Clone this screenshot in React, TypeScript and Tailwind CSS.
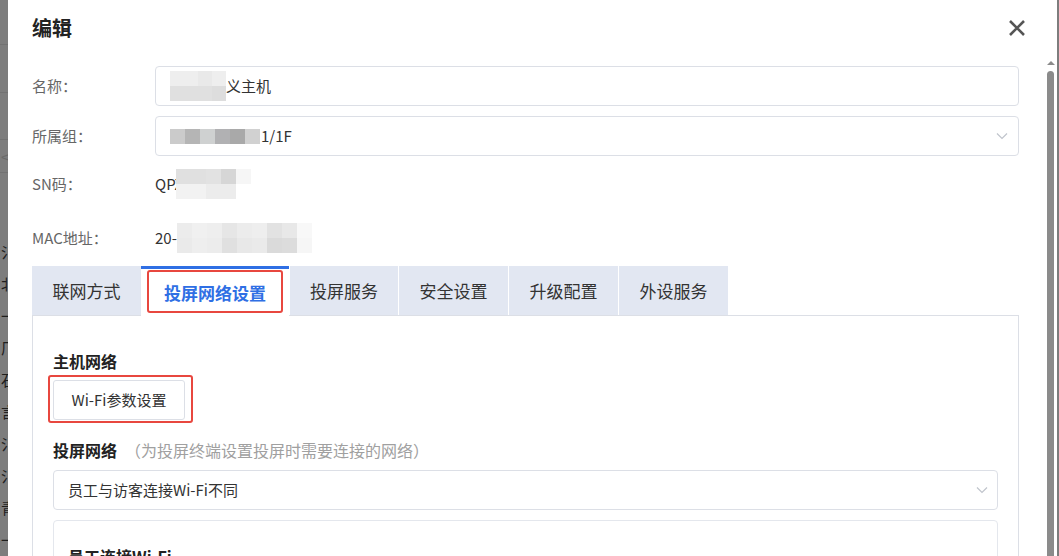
import React from 'react'

const font = { fontFamily: '"Noto Sans CJK SC", "Noto Sans", sans-serif' }

// pixelated blur blocks that hide private values
const Mosaic = ({ rows, cell = 'w-[15px]' }: { rows: string[][]; cell?: string }) => (
    <span className="inline-flex flex-col align-middle">
        {rows.map((r, i) => (
            <span key={i} className="flex">
                {r.map((c, j) => (
                    <span key={j} className={`block h-[15px] ${cell}`} style={{ backgroundColor: c }} />
                ))}
            </span>
        ))}
    </span>
)

const Chevron = () => (
    <svg width="12" height="8" viewBox="0 0 12 8" fill="none">
        <path d="M1 1.5 L6 6.5 L11 1.5" stroke="#c0c4cc" strokeWidth="1.2" />
    </svg>
)

const tabs = [
    { name: '联网方式', w: 'w-[109px]' },
    { name: '投屏网络设置', w: 'w-[148px]', active: true },
    { name: '投屏服务', w: 'w-[109px]' },
    { name: '安全设置', w: 'w-[110px]' },
    { name: '升级配置', w: 'w-[110px]' },
    { name: '外设服务', w: 'w-[110px]' },
]

const bgChars = ['氵', '北', '一', '厂', '石', '言', '氵', '氵', '青', '一']

export default function App() {
    return (
        <div className="flex w-[1059px] h-[556px] overflow-hidden bg-[#7d7d7d]" style={font}>
            {/* page behind the overlay */}
            <div className="w-[8px] shrink-0 overflow-hidden flex flex-col">
                <div className="h-[48px] border-b border-[#727272]"></div>
                <div className="h-[50px] border-b border-[#727272]"></div>
                <div className="h-[50px] border-b border-[#727272]"></div>
                <div className="h-[33px] border-b border-[#727272] text-[#6a6a6a] text-[15px] leading-[33px] pl-[1px]">&lt;</div>
                <div className="h-[67px]"></div>
                <div className="flex flex-col pl-[1px] text-[15px] leading-[32px] text-[#1e1e1e]">
                    {bgChars.map((c, i) => (
                        <span key={i} className="whitespace-nowrap">{c}</span>
                    ))}
                </div>
            </div>

            {/* modal */}
            <div className="w-[1048px] shrink-0 bg-white flex flex-col">
                <div className="h-[55px] shrink-0 flex items-center justify-between pl-[24px] pr-[30px]">
                    <h2 className="text-[20px] font-bold text-[#222] leading-[28px]">编辑</h2>
                    <svg width="18" height="18" viewBox="0 0 18 18">
                        <path d="M2 2 L16 16 M16 2 L2 16" stroke="#555" strokeWidth="2.6" />
                    </svg>
                </div>

                <div className="flex flex-1 min-h-0">
                    <div className="flex-1 pl-[24px] pr-[28px] pt-[11px] text-[15px]">
                        <div className="flex items-center">
                            <span className="w-[123px] shrink-0 text-[#666]">名称：</span>
                            <div className="flex-1 h-[40px] border border-[#dcdfe6] rounded-[4px] flex items-center pl-[14px] text-[#333]">
                                <Mosaic cell="w-[14px]" rows={[['#eeeeee', '#eeeeee', '#e9e9e9', '#eeeeee'], ['#e0e0e0', '#e0e0e0', '#e0e0e0', '#dddddd']]} />
                                <span>义主机</span>
                            </div>
                        </div>
                        <div className="flex items-center mt-[10px]">
                            <span className="w-[123px] shrink-0 text-[#666]">所属组：</span>
                            <div className="flex-1 h-[40px] border border-[#dcdfe6] rounded-[4px] flex items-center pl-[14px] pr-[10px] text-[#333]">
                                <Mosaic rows={[['#cbcbcb', '#b5b5b5', '#cfd1d1', '#b1b1b3', '#a9a9a9', '#d1d1d1']]} />
                                <span className="ml-[1px]">1/1F</span>
                                <span className="ml-auto"><Chevron /></span>
                            </div>
                        </div>
                        <div className="flex items-center mt-[8px] h-[40px]">
                            <span className="w-[123px] shrink-0 text-[#666]">SN码：</span>
                            <span className="text-[#333]">QPZ</span>
                            <span className="-ml-[7px]">
                                <Mosaic rows={[['#e0e0e0', '#e0e0e0', '#e2e2e2', '#d6d6d6', '#f6f6f6'], ['#f2f2f2', '#f2f2f2', '#ececec', '#ececec', '#ffffff']]} />
                            </span>
                        </div>
                        <div className="flex items-center mt-[14px] h-[40px]">
                            <span className="w-[123px] shrink-0 text-[#666]">MAC地址：</span>
                            <span className="text-[#333]">20-</span>
                            <Mosaic rows={[['#ececec', '#f0f0f0', '#eeeeee', '#e6e6e6', '#ececec', '#eeeeee', '#e2e2e2', '#e8e8e8', '#f8f8f8'], ['#eaeaea', '#eeeeee', '#ececec', '#e0e0e0', '#e8e8e8', '#eaeaea', '#dadada', '#dcdcdc', '#f6f6f6']]} />
                        </div>

                        {/* tabs */}
                        <div className="flex mt-[8px] h-[50px] border-b border-[#dcdfe6]">
                            {tabs.map((t) => (
                                <div
                                    key={t.name}
                                    className={
                                        t.active
                                            ? `${t.w} relative bg-white border-t-[3px] border-[#2f6fe4] -mb-[1px] flex items-center justify-center text-[17px] font-bold text-[#2f6fe4]`
                                            : `${t.w} bg-[#e2e7f2] border-l border-white first:border-l-0 flex items-center justify-center text-[17px] text-[#333]`
                                    }
                                >
                                    {t.name}
                                    {t.active && (
                                        <span className="absolute left-[6px] right-[6px] top-[1px] bottom-[3px] border-2 border-[#e8473f] rounded-[3px]"></span>
                                    )}
                                </div>
                            ))}
                        </div>

                        <div className="border-x border-[#dcdfe6] px-[20px] pt-[34px] h-[400px]">
                            <div className="text-[16px] font-bold text-[#222] leading-[22px]">主机网络</div>
                            <div className="relative mt-[8px] w-[132px]">
                                <button className="w-[132px] h-[40px] border border-[#dcdfe6] rounded-[3px] text-[15px] text-[#333] bg-white">Wi-Fi参数设置</button>
                                <span className="absolute -left-[5px] -right-[8px] -top-[5px] -bottom-[3px] border-2 border-[#e8473f] rounded-[3px]"></span>
                            </div>
                            <div className="mt-[19px] leading-[22px] flex items-baseline">
                                <span className="text-[16px] font-bold text-[#222]">投屏网络</span>
                                <span className="text-[16px] text-[#a0a0a0] ml-[8px]">（为投屏终端设置投屏时需要连接的网络）</span>
                            </div>
                            <div className="mt-[9px] h-[40px] border border-[#dcdfe6] rounded-[4px] flex items-center pl-[14px] pr-[9px] text-[#333]">
                                <span>员工与访客连接Wi-Fi不同</span>
                                <span className="ml-auto"><Chevron /></span>
                            </div>
                            <div className="mt-[10px] border border-[#e4e7ed] rounded-[4px] pt-[24px] px-[14px] h-[120px]">
                                <div className="text-[16px] font-bold text-[#222] leading-[22px]">员工连接Wi-Fi</div>
                            </div>
                        </div>
                    </div>

                    {/* scrollbar */}
                    <div className="w-[7px] mr-[2px] flex flex-col items-center pt-[6px]">
                        <div className="w-0 h-0 border-l-[4px] border-r-[4px] border-b-[4px] border-l-transparent border-r-transparent border-b-[#8b8b8b]"></div>
                        <div className="mt-[6px] w-[7px] flex-1 bg-[#8b8b8b] rounded-t-[4px]"></div>
                    </div>
                </div>
            </div>

            <div className="w-[1px] bg-white shrink-0"></div>
        </div>
    )
}
